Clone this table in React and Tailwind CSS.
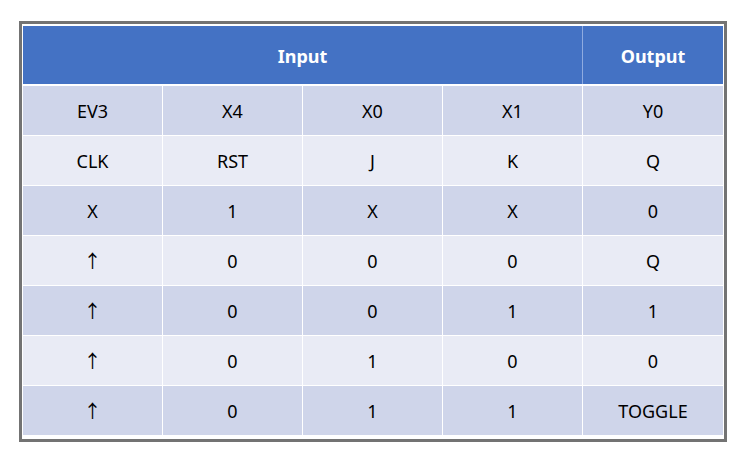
import React from "react";

const rows = [
  ["EV3", "X4", "X0", "X1", "Y0"],
  ["CLK", "RST", "J", "K", "Q"],
  ["X", "1", "X", "X", "0"],
  ["↑", "0", "0", "0", "Q"],
  ["↑", "0", "0", "1", "1"],
  ["↑", "0", "1", "0", "0"],
  ["↑", "0", "1", "1", "TOGGLE"],
];

export default function App() {
  return (
    <div className="w-[744px] h-[457px] bg-white pt-[21px] pl-[19px]" style={{ fontFamily: '"Noto Sans", "Noto Sans CJK KR", sans-serif' }}>
      <div className="w-[708px] h-[421px] border-[3px] border-[#737373] bg-white pt-[2px] pl-px pr-[2px]">
        <div className="flex flex-col w-[700px]">
          <div className="grid grid-cols-[559px_140px] gap-px h-[58px] bg-[#8fabe0] text-white font-bold text-[18px]">
            <div className="bg-[#4472c4] flex items-center justify-center pt-[3px]">Input</div>
            <div className="bg-[#4472c4] flex items-center justify-center pt-[3px]">Output</div>
          </div>
          <div className="flex flex-col gap-px mt-[2px]">
            {rows.map((r, i) => (
              <div
                key={i}
                className="grid grid-cols-[139px_139px_139px_139px_140px] gap-px h-[49px] text-[18px] text-black"
              >
                {r.map((c, j) => (
                  <div
                    key={j}
                    className={`${i % 2 === 0 ? "bg-[#cfd5ea]" : "bg-[#e9ebf5]"} flex items-center justify-center pt-[2px]`}
                  >
                    {c}
                  </div>
                ))}
              </div>
            ))}
          </div>
        </div>
      </div>
    </div>
  );
}
